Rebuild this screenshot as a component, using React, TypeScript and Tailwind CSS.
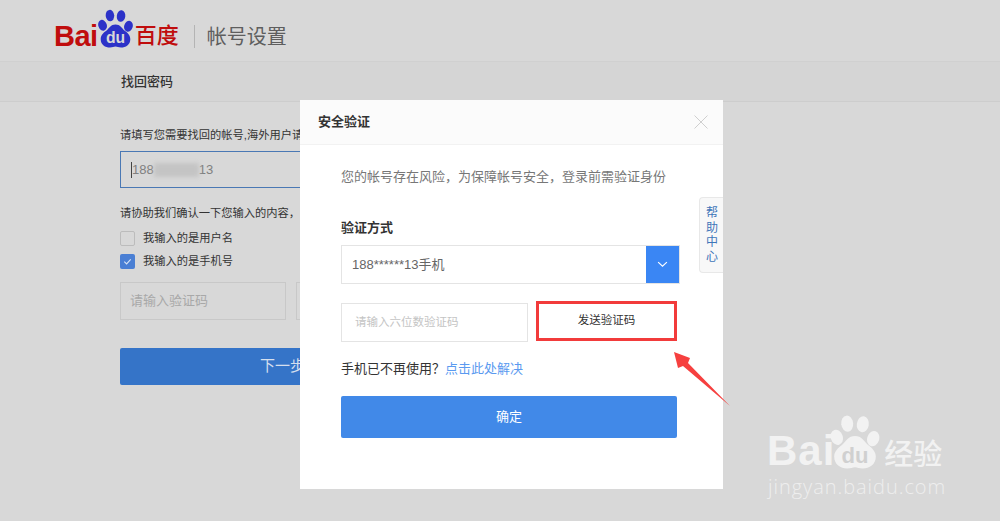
const cjk = "font-['Liberation_Sans','Noto_Sans_CJK_SC',sans-serif]";

function Paw({ fill, text }: { fill: string; text: string }) {
  return (
    <svg viewBox="0 0 40 42" className="w-full h-full">
      <g fill={fill}>
        <ellipse cx="6" cy="17" rx="4.6" ry="6" transform="rotate(-18 6 17)" />
        <ellipse cx="14" cy="6.5" rx="4.6" ry="6.2" transform="rotate(-6 14 6.5)" />
        <ellipse cx="26" cy="7" rx="4.6" ry="6.2" transform="rotate(8 26 7)" />
        <ellipse cx="34" cy="18" rx="4.6" ry="6" transform="rotate(18 34 18)" />
        <path d="M20 16c5 0 7 4 10 7 3 2 6 5 6 9 0 6-5 9-10 9-3 0-4-1-6-1s-3 1-6 1c-5 0-10-3-10-9 0-4 3-7 6-9 3-3 5-7 10-7z" />
      </g>
      <text x="20" y="36.5" textAnchor="middle" fontSize="17" fontWeight="700" fontFamily="Liberation Sans" fill={text}>
        du
      </text>
    </svg>
  );
}

function BackgroundPage() {
  return (
    <div className={`h-[521px] overflow-hidden bg-[#d8d8d8] ${cjk}`}>
      {/* Header */}
      <div className="h-[62px] flex items-center pl-[54px] border-b border-[#d0d0d0]">
        <span className="text-[29px] font-bold text-[#c00d0d] tracking-[-0.5px] mt-[13px]">Bai</span>
        <div className="w-[37px] h-[42px] -ml-[1px] mb-[4px]">
          <Paw fill="#2c32c8" text="#d8d8d8" />
        </div>
        <span className="text-[22px] leading-none text-[#c00d0d] font-medium mt-[10px] ml-[1px]">百度</span>
        <div className="w-px h-[23px] bg-[#b4b4b4] ml-[15px] mt-[12px]" />
        <span className="text-[20px] leading-none text-[#5e5e5e] ml-[12px] mt-[12px]">帐号设置</span>
      </div>

      {/* Sub nav */}
      <div className="h-[40px] bg-[#d5d5d5] border-b border-[#cdcdcd] flex items-center pl-[121px]">
        <span className="text-[13px] font-medium text-[#333333]">找回密码</span>
      </div>

      {/* Form behind the dialog */}
      <div className="pl-[120px] pt-[25px] w-[700px] text-[11.25px] text-[#333333]">
        <p className="w-[180px] h-[17px] leading-[17px] overflow-hidden whitespace-nowrap">
          请填写您需要找回的帐号,海外用户请
        </p>
        <div className="w-[180px] h-[37px] mt-[7px] border border-r-0 border-[#4a78b4] flex items-center pl-[10px] text-[13px] text-[#808080]">
          <span className="w-px h-[16px] bg-[#444444]" />
          <span>188</span>
          <span className="w-[45px] h-[14px] bg-[#c4c4c4] blur-[2px]" />
          <span>13</span>
        </div>
        <p className="mt-[17px] h-[17px] leading-[17px]">请协助我们确认一下您输入的内容{"\uFF0C"}</p>
        <div className="mt-[8px] flex items-center gap-[8px] h-[16px]">
          <span className="w-[15px] h-[15px] rounded-[2px] border border-[#bcbcbc]" />
          <span>我输入的是用户名</span>
        </div>
        <div className="mt-[7px] flex items-center gap-[8px] h-[16px]">
          <span className="w-[15px] h-[15px] rounded-[2px] bg-[#4a7fd4] flex items-center justify-center">
            <svg viewBox="0 0 12 12" className="w-[11px] h-[11px]" fill="none" stroke="#d8e4f6" strokeWidth="1.2">
              <path d="M2.5 6.2 5 8.6l4.5-5" />
            </svg>
          </span>
          <span>我输入的是手机号</span>
        </div>
        <div className="mt-[13px] flex gap-[10px]">
          <div className="w-[166px] h-[38px] border border-[#c8c8c8] flex items-center pl-[9px] text-[13px] text-[#a8a8a8]">
            请输入验证码
          </div>
          <div className="w-[4px] h-[38px] border border-r-0 border-[#c8c8c8]" />
        </div>
        <div className="mt-[28px] w-[180px] h-[37px] rounded-l-[2px] bg-[#3574c8] flex items-center pl-[140px] text-[15px] text-[#d5dfee] overflow-hidden whitespace-nowrap">
          下一步
        </div>
      </div>
    </div>
  );
}

function Dialog() {
  return (
    <div className={`absolute left-[300px] top-[100px] w-[423px] h-[389px] bg-white ${cjk}`}>
      <div className="h-[45px] bg-[#fbfbfb] border-b border-[#f2f2f2] flex items-center justify-between pl-[18px] pr-[15px]">
        <span className="text-[13px] font-bold text-[#333333]">安全验证</span>
        <svg viewBox="0 0 14 14" className="w-[14px] h-[14px]" fill="none" stroke="#cfcfcf" strokeWidth="1">
          <path d="M0.5 0.5 13.5 13.5M13.5 0.5 0.5 13.5" />
        </svg>
      </div>

      <div className="pl-[41px] w-[380px]">
        <p className="mt-[23px] h-[18px] leading-[18px] text-[13px] text-[#777777] whitespace-nowrap">
          您的帐号存在风险{"\uFF0C"}为保障帐号安全{"\uFF0C"}登录前需验证身份
        </p>
        <p className="mt-[33px] h-[18px] leading-[18px] text-[13px] font-bold text-[#333333]">验证方式</p>

        {/* Select */}
        <div className="mt-[8px] w-[339px] h-[39px] border border-[#e4e4e4] flex items-center justify-between">
          <span className="pl-[10px] text-[13px] text-[#666666]">188******13手机</span>
          <div className="w-[33px] h-[37px] bg-[#3a86f4] flex items-center justify-center">
            <svg viewBox="0 0 12 8" className="w-[11px] h-[7px]" fill="none" stroke="white" strokeWidth="1.3">
              <path d="M1 1.2 6 6l5-4.8" />
            </svg>
          </div>
        </div>

        {/* Code row */}
        <div className="mt-[17px] flex items-start gap-[8px] h-[41px]">
          <div className="mt-[2px] w-[187px] h-[39px] border border-[#e4e4e4] flex items-center pl-[13px] text-[11.5px] text-[#c4c4c4]">
            请输入六位数验证码
          </div>
          <div className="w-[141px] h-[40px] border-[3px] border-[#f23b3b] flex items-center justify-center text-[11.5px] text-[#333333]">
            发送验证码
          </div>
        </div>

        <p className="mt-[17px] h-[20px] leading-[20px] text-[13px] text-[#333333] whitespace-nowrap">
          手机已不再使用{"\uFF1F"}<span className="text-[#5a9af0]">点击此处解决</span>
        </p>
        <div className="mt-[17px] w-[336px] h-[42px] rounded-[2px] bg-[#4189e8] flex items-center justify-center text-[13px] text-white">
          确定
        </div>
      </div>

      {/* Help tab */}
      <div className="absolute right-0 top-[97px] w-[24px] h-[76px] bg-[#f8f8f8] border border-r-0 border-[#e8e8e8] rounded-l-[4px] flex items-center justify-center pl-[1px] text-[12px] leading-[14.5px] text-[#3f76b8] text-center">
        帮<br />助<br />中<br />心
      </div>
    </div>
  );
}

function Watermark() {
  return (
    <div className={`absolute left-[767px] top-[414px] w-[190px] text-[#f2f2f2] ${cjk}`}>
      <div className="flex items-end h-[57px]">
        <span className="text-[42px] leading-[42px] font-bold tracking-[1px] -mb-[1px]">Bai</span>
        <div className="w-[52px] h-[57px] -ml-[6px] shrink-0">
          <Paw fill="#f2f2f2" text="#d0d0d0" />
        </div>
        <span className="text-[29px] leading-[32px] font-medium ml-[3px] whitespace-nowrap">经验</span>
      </div>
      <p className="font-['Open_Sans',sans-serif] font-light text-[20px] leading-[24px] mt-[4px] ml-[1px] tracking-[0.95px] text-[#eeeeee] whitespace-nowrap">
        jingyan.baidu.com
      </p>
    </div>
  );
}

export default function App() {
  return (
    <div className="relative w-[1000px] h-[521px] overflow-hidden">
      <BackgroundPage />
      <Dialog />

      {/* Red annotation arrow */}
      <svg viewBox="0 0 70 60" className="absolute left-[670px] top-[350px] w-[70px] h-[60px]">
        <path d="M4 2 20 8 18 13 60 56 13 16 8 18z" fill="#f6403f" />
      </svg>

      <Watermark />
    </div>
  );
}
